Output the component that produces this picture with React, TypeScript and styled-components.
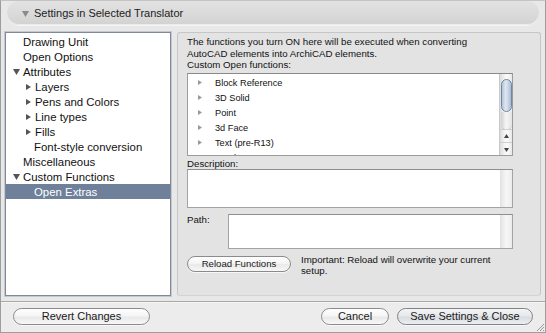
import styled, { createGlobalStyle, css } from 'styled-components';

const GlobalStyle = createGlobalStyle`
  html, body {
    margin: 0;
    padding: 0;
    background: #e8e8e8;
  }
  * {
    box-sizing: border-box;
  }
`;

const FONT = `"Lucida Grande", "Liberation Sans", Arial, sans-serif`;

const Window = styled.div`
  width: 546px;
  height: 333px;
  display: flex;
  flex-direction: column;
  background: #e8e8e8;
  border: 1px solid #9d9d9d;
  border-top-color: #c4c4c4;
  font-family: ${FONT};
  color: #111;
  overflow: hidden;
  position: relative;
`;

const HeaderBar = styled.div`
  height: 24px;
  margin: 0 6px 0 6px;
  border-radius: 12px;
  background: linear-gradient(#e2e2e2, #d9d9d9 60%, #d2d2d2);
  box-shadow: inset 0 -1px 0 #ececec, 0 1px 0 #f4f4f4;
  display: flex;
  align-items: center;
  gap: 5px;
  padding-left: 15px;
  font-size: 11px;
  color: #222;
`;

const Body = styled.div`
  display: flex;
  gap: 6px;
  height: 264px;
  margin-top: 7px;
  padding: 0 4px 0 4px;
`;

const Sidebar = styled.div`
  width: 166px;
  background: #fff;
  border: 1px solid #7f8997;
  box-shadow: 0 0 0 1px #c3c9d1;
  padding-top: 1px;
  font-size: 11.4px;
`;

const TreeRow = styled.div<{ $indent: number; $selected?: boolean }>`
  height: 15px;
  display: flex;
  align-items: center;
  padding-left: ${(p) => p.$indent}px;
  white-space: nowrap;
  ${(p) =>
    p.$selected &&
    css`
      background: #6f819a;
      color: #fff;
    `}
`;

const Toggle = styled.span`
  width: 11px;
  display: inline-flex;
  align-items: center;
  justify-content: flex-start;
  padding-left: 1px;
`;

const Panel = styled.div`
  flex: 1;
  background: #e3e3e3;
  border: 1px solid #c6c6c6;
  border-bottom-color: #d4d4d4;
  border-radius: 3px;
  padding: 3px 27px 0 9px;
  font-size: 9.7px;
  display: flex;
  flex-direction: column;
`;

const Intro = styled.div`
  line-height: 11.5px;
`;

const Label = styled.div<{ $top?: number }>`
  line-height: 11px;
  margin-top: ${(p) => p.$top ?? 0}px;
`;

const ListBox = styled.div`
  height: 83px;
  margin-top: 3px;
  background: #fff;
  border: 1px solid #9c9c9c;
  border-top-color: #8a8a8a;
  display: flex;
  overflow: hidden;
`;

const ListItems = styled.div`
  flex: 1;
  padding-top: 1px;
  font-size: 9.2px;
  overflow: hidden;
`;

const ListRow = styled.div`
  height: 15px;
  display: flex;
  align-items: center;
  padding-left: 9px;
  gap: 13px;
  white-space: nowrap;
`;

const Track = styled.div`
  width: 13px;
  border-left: 1px solid #c8c8c8;
  background: linear-gradient(to right, #dcdcdc, #f2f2f2 35%, #fbfbfb 60%, #e8e8e8);
  display: flex;
  flex-direction: column;
  align-items: center;
`;

const Thumb = styled.div`
  width: 11px;
  height: 33px;
  margin-top: 5px;
  border-radius: 6px;
  border: 1px solid #6f86a4;
  background: linear-gradient(to right, #b4c3d6, #dfe7f1 40%, #c8d5e5 70%, #a9bbd1);
`;

const ThumbTail = styled.div`
  width: 11px;
  height: 18px;
  border-radius: 0 0 6px 6px;
  background: linear-gradient(to right, #d0d0d0, #f6f6f6 45%, #e4e4e4);
  box-shadow: 0 1px 0 #c2c2c2;
`;

const Arrow = styled.div`
  width: 12px;
  height: 13px;
  display: flex;
  align-items: center;
  justify-content: center;
  border-top: 1px solid #cfcfcf;
`;

const Spacer = styled.div`
  flex: 1;
`;

const Field = styled.div<{ $height: number }>`
  height: ${(p) => p.$height}px;
  flex: 1;
  background: #fff;
  border: 1px solid #a3a3a3;
  border-top-color: #8e8e8e;
  display: flex;
  justify-content: flex-end;
`;

const FieldTrack = styled.div`
  width: 12px;
  background: linear-gradient(to right, #e6e6e6, #f6f6f6 50%, #ececec);
  border-left: 1px solid #e2e2e2;
`;

const DescBox = styled.div`
  display: flex;
`;

const PathRow = styled.div`
  display: flex;
  margin-top: 6px;
`;

const PathLabel = styled.div`
  width: 41px;
  line-height: 12px;
`;

const ActionRow = styled.div`
  display: flex;
  margin-top: 7px;
  gap: 10px;
  align-items: flex-start;
`;

const Button = styled.button<{ $width: number; $size?: number; $primary?: boolean }>`
  width: ${(p) => p.$width}px;
  height: ${(p) => (p.$size ? 16 : 17)}px;
  padding: 0;
  border-radius: 9px;
  border: 1px solid #8b8b8b;
  background: linear-gradient(#ffffff, #f5f5f5 45%, #e9e9e9 55%, #f7f7f7);
  box-shadow: 0 1px 0 #f8f8f8;
  font-family: ${FONT};
  font-size: ${(p) => p.$size ?? 11}px;
  color: #1a1a1a;
  line-height: 1;
  ${(p) =>
    p.$primary &&
    css`
      background: linear-gradient(#f4f5f7, #e6e8eb 45%, #d9dce0 55%, #eceef1);
      border-color: #7f8286;
    `}
`;

const Note = styled.div`
  line-height: 10.5px;
  margin-top: -1px;
`;

const Footer = styled.div`
  flex: 1;
  margin-top: 5px;
  border-top: 1px solid #a8a8a8;
  box-shadow: inset 0 1px 0 #f6f6f6;
  background: #ececec;
  display: flex;
  align-items: flex-start;
  padding: 6px 12px 0 12px;
  gap: 8px;
`;

const Grip = styled.svg`
  position: absolute;
  right: 0;
  bottom: 0;
`;

function Tri({ dir, color = '#5a5a5a', size = 7 }: { dir: 'down' | 'right' | 'up'; color?: string; size?: number }) {
  const pts =
    dir === 'down'
      ? `0,1 ${size},1 ${size / 2},${size}`
      : dir === 'up'
        ? `0,${size - 1} ${size},${size - 1} ${size / 2},0`
        : `1,0 ${size},${size / 2} 1,${size}`;
  return (
    <svg width={size} height={size} viewBox={`0 0 ${size} ${size}`}>
      <polygon points={pts} fill={color} />
    </svg>
  );
}

const tree: { label: string; indent: number; toggle?: 'down' | 'right'; selected?: boolean }[] = [
  { label: 'Drawing Unit', indent: 17 },
  { label: 'Open Options', indent: 17 },
  { label: 'Attributes', indent: 6, toggle: 'down' },
  { label: 'Layers', indent: 18, toggle: 'right' },
  { label: 'Pens and Colors', indent: 18, toggle: 'right' },
  { label: 'Line types', indent: 18, toggle: 'right' },
  { label: 'Fills', indent: 18, toggle: 'right' },
  { label: 'Font-style conversion', indent: 28 },
  { label: 'Miscellaneous', indent: 17 },
  { label: 'Custom Functions', indent: 6, toggle: 'down' },
  { label: 'Open Extras', indent: 28, selected: true },
];

const functions = ['Block Reference', '3D Solid', 'Point', '3d Face', 'Text (pre-R13)', 'Hatch'];

export default function App() {
  return (
    <>
      <GlobalStyle />
      <Window>
        <HeaderBar>
          <Tri dir="down" color="#8a8a8a" size={7} />
          <span>Settings in Selected Translator</span>
        </HeaderBar>
        <Body>
          <Sidebar>
            {tree.map((item) => (
              <TreeRow key={item.label} $indent={item.indent} $selected={item.selected}>
                {item.toggle && (
                  <Toggle>
                    <Tri dir={item.toggle} color="#555" size={item.toggle === 'down' ? 7 : 6} />
                  </Toggle>
                )}
                {item.label}
              </TreeRow>
            ))}
          </Sidebar>
          <Panel>
            <Intro>
              The functions you turn ON here will be executed when converting
              <br />
              AutoCAD elements into ArchiCAD elements.
            </Intro>
            <Label $top={0}>Custom Open functions:</Label>
            <ListBox>
              <ListItems>
                {functions.map((f) => (
                  <ListRow key={f}>
                    <Tri dir="right" color="#9a9a9a" size={5} />
                    <span>{f}</span>
                  </ListRow>
                ))}
              </ListItems>
              <Track>
                <Thumb />
                <ThumbTail />
                <Spacer />
                <Arrow>
                  <Tri dir="up" color="#444" size={5} />
                </Arrow>
                <Arrow>
                  <Tri dir="down" color="#444" size={5} />
                </Arrow>
              </Track>
            </ListBox>
            <Label $top={2}>Description:</Label>
            <DescBox>
              <Field $height={39}>
                <FieldTrack />
              </Field>
            </DescBox>
            <PathRow>
              <PathLabel>Path:</PathLabel>
              <Field $height={35}>
                <FieldTrack />
              </Field>
            </PathRow>
            <ActionRow>
              <Button $width={104} $size={9.6}>
                Reload Functions
              </Button>
              <Note>
                Important: Reload will overwrite your current
                <br />
                setup.
              </Note>
            </ActionRow>
          </Panel>
        </Body>
        <Footer>
          <Button $width={137}>Revert Changes</Button>
          <Spacer />
          <Button $width={68}>Cancel</Button>
          <Button $width={136} $primary>
            Save Settings &amp; Close
          </Button>
        </Footer>
        <Grip width="10" height="10" viewBox="0 0 10 10">
          <line x1="9" y1="2" x2="2" y2="9" stroke="#999" strokeWidth="1" />
          <line x1="9" y1="5" x2="5" y2="9" stroke="#999" strokeWidth="1" />
          <line x1="9" y1="8" x2="8" y2="9" stroke="#999" strokeWidth="1" />
        </Grip>
      </Window>
    </>
  );
}
